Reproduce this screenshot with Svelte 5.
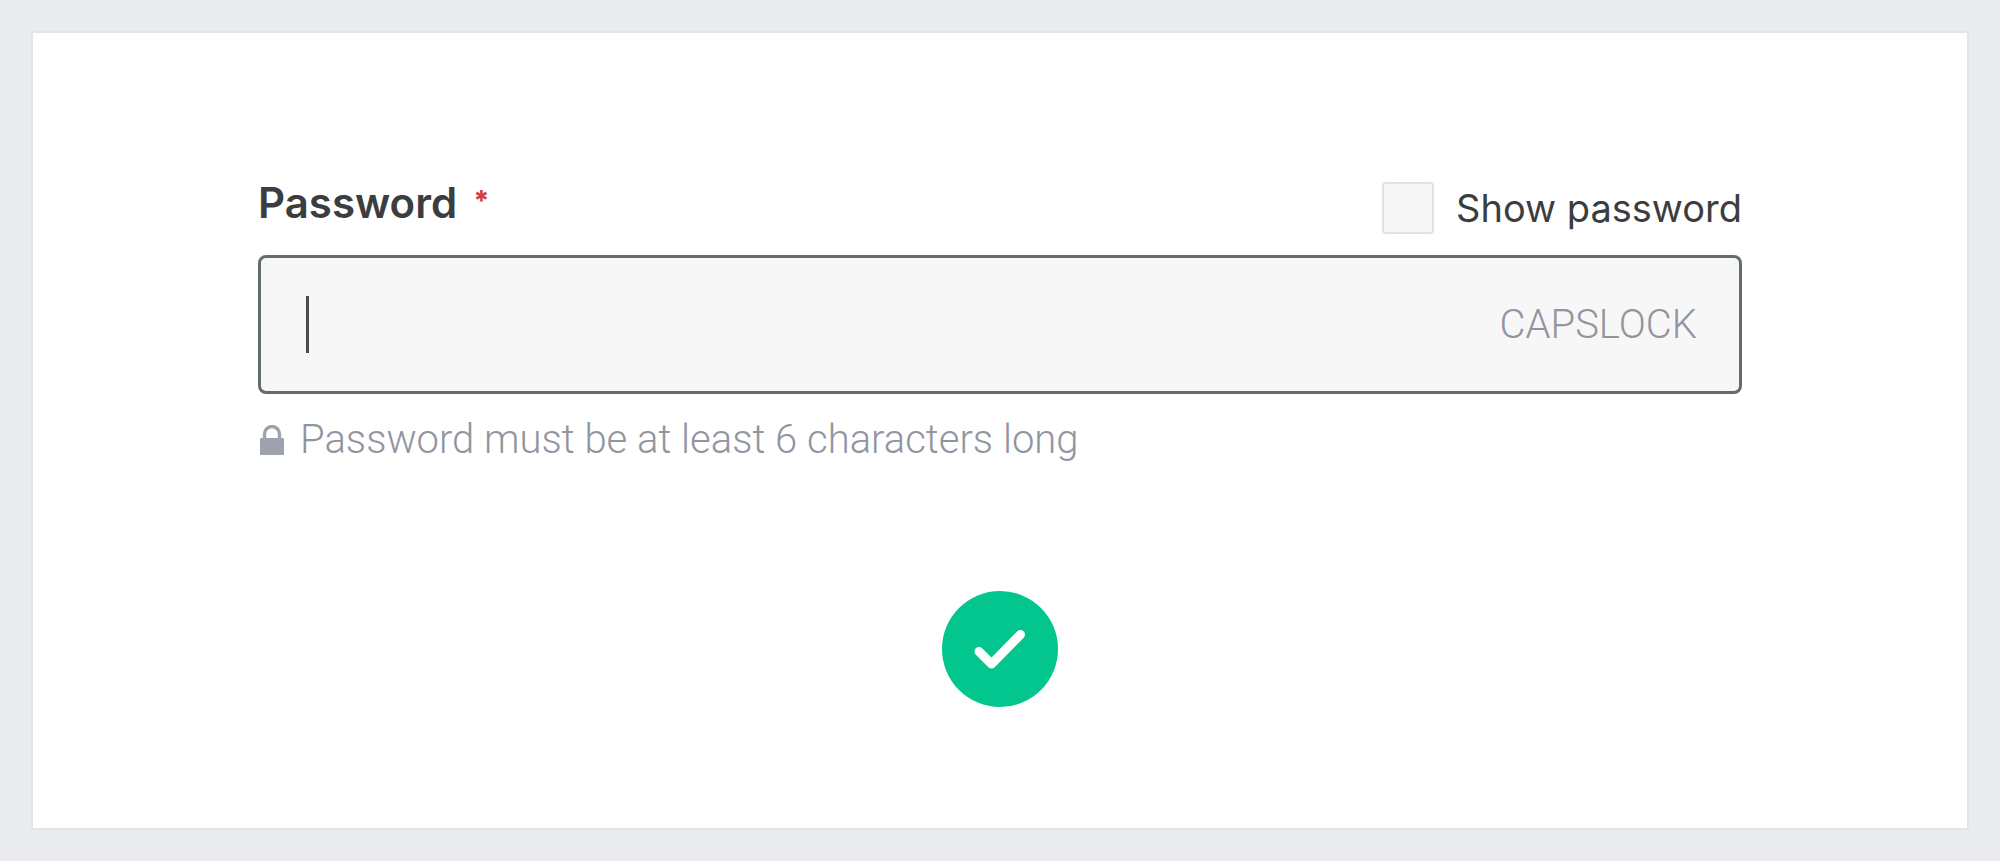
<script lang="ts">
  let password = $state('');
  let visible = $state(false);

  function handleSubmit(event: SubmitEvent) {
    event.preventDefault();
  }
</script>

<main class="page">
  <form class="card" onsubmit={handleSubmit}>
    <header class="field-header">
      <label class="field-label" for="password">Password <span class="required">*</span></label>
      <label class="toggle">
        <input class="toggle-box" type="checkbox" bind:checked={visible} />
        Show password
      </label>
    </header>

    <div class="field">
      <input
        id="password"
        class="field-input"
        type={visible ? 'text' : 'password'}
        aria-describedby="password-hint"
        required
        bind:value={password}
      />
      {#if password === ''}
        <span class="caret"></span>
      {/if}
      <span class="capslock">CAPSLOCK</span>
    </div>

    <p id="password-hint" class="hint">
      <svg class="lock" viewBox="0 0 24 30" aria-hidden="true">
        <path d="M4.5 13V9a7.5 7.5 0 0 1 15 0v4" fill="none" stroke="currentColor" stroke-width="3.4" />
        <rect x="0" y="13" width="24" height="17" rx="1" fill="currentColor" />
      </svg>
      Password must be at least 6 characters long
    </p>

    <button class="submit" type="submit" aria-label="Submit">
      <svg viewBox="0 0 116 116" aria-hidden="true">
        <path
          d="M37 60.5 49.5 73 78.5 43.5"
          fill="none"
          stroke="currentColor"
          stroke-width="9"
          stroke-linecap="round"
          stroke-linejoin="round"
        />
      </svg>
    </button>
  </form>
</main>

<style>
  :global(body) {
    margin: 0;
    background: #eaebef;
  }

  .page {
    box-sizing: border-box;
    min-height: 100vh;
    padding: 31px;
    display: grid;
  }

  .card {
    border: 2px solid #e3e4e6;
    background: #ffffff;
    padding: 148px 225px 120px;
    display: flex;
    flex-direction: column;
    color: #3c3d3e;
    font-family: Inter, sans-serif;
  }

  .field-header {
    display: flex;
    justify-content: space-between;
    align-items: center;
    margin-bottom: 20px;
  }

  .field-label {
    display: flex;
    align-items: flex-start;
    gap: 16px;
    padding-bottom: 10px;
    font-size: 42px;
    line-height: 44px;
    font-weight: 600;
  }

  .required {
    color: #d0403f;
    font-size: 28px;
    line-height: 40px;
    font-weight: 800;
  }

  .toggle {
    display: flex;
    align-items: center;
    gap: 22px;
    font-size: 38px;
    line-height: 44px;
  }

  .toggle-box {
    appearance: none;
    box-sizing: border-box;
    width: 52px;
    height: 52px;
    margin: 0;
    border: 2px solid #e1e1e1;
    border-radius: 4px;
    background: #f7f7f7;
  }

  .toggle-box:checked {
    background: #00c58e;
  }

  .field {
    position: relative;
    display: flex;
    align-items: center;
    gap: 24px;
    height: 133px;
    padding: 0 42px;
    border: 3px solid #636d6b;
    border-radius: 8px;
    background: #f7f7f7;
  }

  .field-input {
    flex: 1;
    min-width: 0;
    height: 56px;
    padding: 0;
    border: 0;
    outline: 0;
    background: transparent;
    color: inherit;
    font: 40px Roboto, sans-serif;
    caret-color: transparent;
  }

  .caret {
    position: absolute;
    left: 45px;
    width: 3px;
    height: 57px;
    background: #4a4b4c;
    pointer-events: none;
  }

  .capslock,
  .hint {
    color: #92959f;
    font-family: Roboto, sans-serif;
    font-size: 40px;
    line-height: 48px;
    font-weight: 300;
  }

  .hint {
    display: flex;
    align-items: center;
    gap: 16px;
    margin: 22px 0 0;
    padding-left: 2px;
  }

  .lock {
    width: 24px;
    height: 30px;
    color: #9ea2ad;
  }

  .submit {
    align-self: center;
    width: 116px;
    height: 116px;
    margin-top: 127px;
    padding: 0;
    border: 0;
    border-radius: 50%;
    background: #03c58e;
    color: #ffffff;
    cursor: pointer;
  }

  .submit svg {
    display: block;
  }
</style>
